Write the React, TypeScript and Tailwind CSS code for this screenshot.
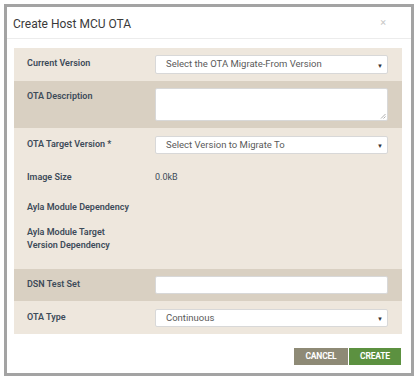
import React from "react";

const Arrow = () => (
  <span className="absolute right-[4px] top-1/2 -translate-y-1/2 text-[6px] text-[#333]">▼</span>
);

function Select({ text, h = "h-[19px]" }: { text: string; h?: string }) {
  return (
    <div className={`relative w-[233px] ${h} bg-white border border-[#d8d8d8] rounded-[2px] flex items-center pl-[10px] text-[9.5px] text-[#5a5a5a]`}>
      {text}
      <Arrow />
    </div>
  );
}

const Label = ({ children }: { children: React.ReactNode }) => (
  <div className="w-[128px] pt-[2px] text-[9px] leading-[13px] font-semibold text-[#3d4b59]">{children}</div>
);

export default function App() {
  return (
    <div className="w-[418px] h-[383px] bg-white pt-[4px] pl-[4px]" style={{ fontFamily: "Roboto, 'Liberation Sans', sans-serif" }}>
      <div className="w-[410px] h-[372px] border-[3px] border-[#a3a3a3] bg-white flex flex-col">
        <div className="h-[32px] border-b border-[#ececec] flex items-center justify-between pl-[6px] pr-[25px] pt-[2px]">
          <span className="text-[12px] text-[#3a3a3a]">Create Host MCU OTA</span>
          <span className="text-[11px] text-[#c8c8c8]">×</span>
        </div>
        <div className="mt-[9px] ml-[7px] w-[388px] flex flex-col">
          <div className="h-[33px] bg-[#eee7dd] flex pt-[7px] pl-[13px]">
            <Label>Current Version</Label>
            <Select text="Select the OTA Migrate-From Version" />
          </div>
          <div className="h-[47px] bg-[#d9d0c2] flex pt-[7px] pl-[13px]">
            <Label>OTA Description</Label>
            <div className="relative w-[233px] h-[33px] bg-white border border-[#d8d8d8] rounded-[2px]">
              <svg className="absolute right-[1px] bottom-[1px]" width="6" height="6" viewBox="0 0 6 6">
                <path d="M5.5 1 L1 5.5 M5.5 3.5 L3.5 5.5" stroke="#999" strokeWidth="0.8" />
              </svg>
            </div>
          </div>
          <div className="h-[141px] bg-[#eee7dd] flex flex-col pl-[13px]">
            <div className="flex pt-[8px] h-[41px]">
              <Label>OTA Target Version *</Label>
              <Select text="Select Version to Migrate To" h="h-[18px]" />
            </div>
            <div className="flex h-[30px]">
              <Label>Image Size</Label>
              <div className="pt-[2px] text-[9px] leading-[13px] text-[#3d4b59]">0.0kB</div>
            </div>
            <div className="flex h-[25px]">
              <Label>Ayla Module Dependency</Label>
            </div>
            <div className="flex">
              <Label>
                Ayla Module Target
                <br />
                Version Dependency
              </Label>
            </div>
          </div>
          <div className="h-[32px] bg-[#d9d0c2] flex pt-[7px] pl-[13px]">
            <Label>DSN Test Set</Label>
            <div className="w-[233px] h-[18px] bg-white border border-[#d8d8d8] rounded-[2px]" />
          </div>
          <div className="h-[33px] bg-[#eee7dd] flex pt-[8px] pl-[13px]">
            <Label>OTA Type</Label>
            <Select text="Continuous" h="h-[18px]" />
          </div>
        </div>
        <div className="mt-[14px] flex justify-end pr-[10px] gap-[1px]">
          <div className="w-[54px] h-[17px] bg-[#8e8a76] text-white text-[8.5px] font-bold flex items-center justify-center tracking-[-0.2px]">CANCEL</div>
          <div className="w-[52px] h-[17px] bg-[#5c9140] text-white text-[8.5px] font-bold flex items-center justify-center tracking-[-0.2px]">CREATE</div>
        </div>
      </div>
    </div>
  );
}
